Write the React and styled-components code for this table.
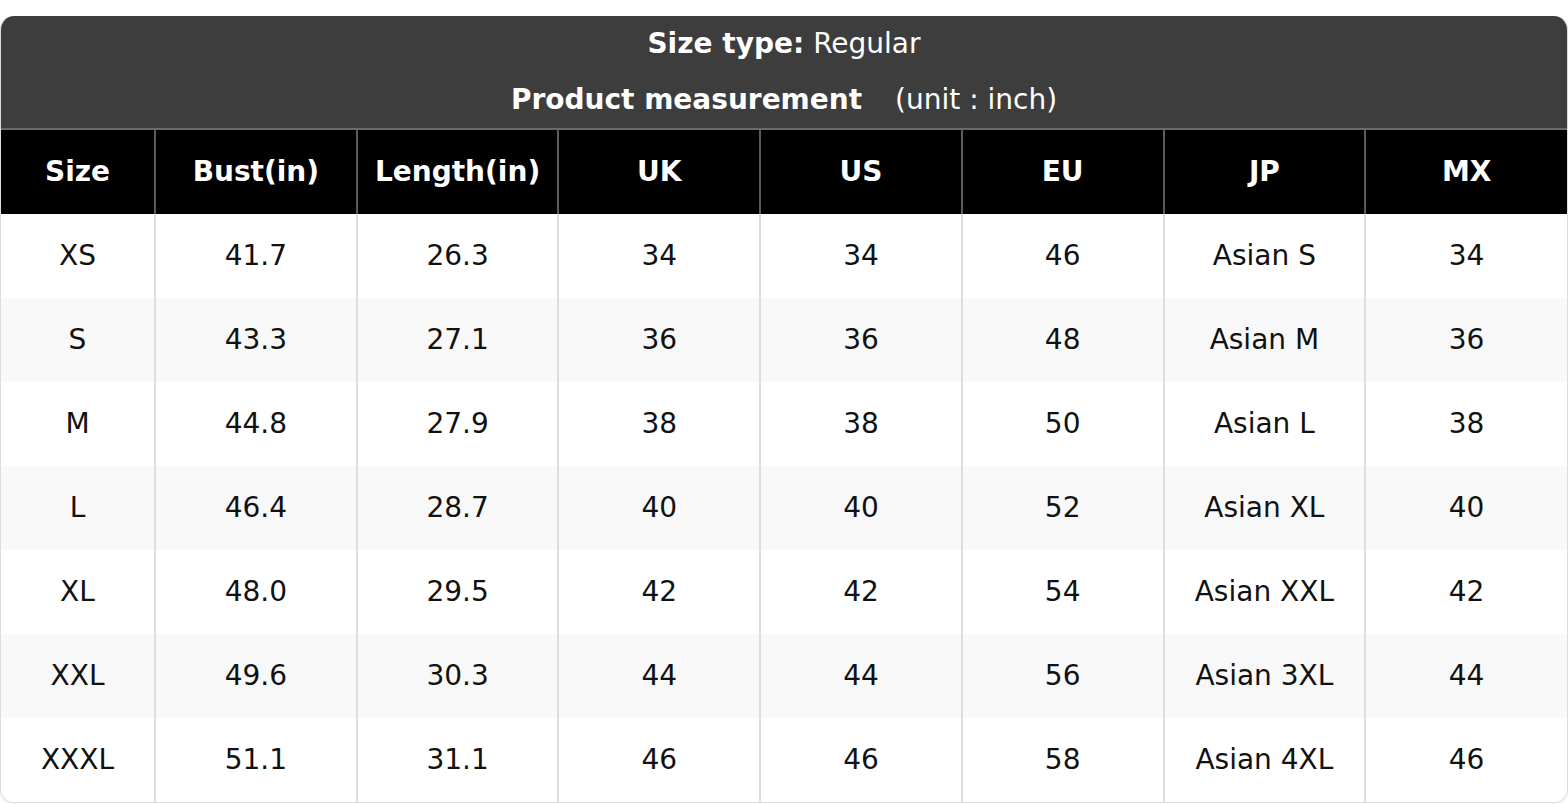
import React from 'react'
import styled, { createGlobalStyle } from 'styled-components'

const GlobalStyle = createGlobalStyle`
     html, body {
          margin: 0;
          padding: 0;
          background: #ffffff;
     }
     body {
          font-family: "DejaVu Sans", "Liberation Sans", sans-serif;
     }
`

const Page = styled.div`
     padding-top: 16px;
     width: 1568px;
`

const Card = styled.div`
     border-radius: 14px;
     overflow: hidden;
     border: 1px solid #dcdcdc;
     border-top: none;
     box-shadow: 0 1px 3px rgba(0, 0, 0, 0.08);
     background: #ffffff;
`

const Caption = styled.div`
     background: #3d3d3d;
     color: #ffffff;
     display: flex;
     flex-direction: column;
     align-items: center;
     font-size: 28px;
     border-bottom: 2px solid #6a6a6a;
`

const CaptionLine = styled.div`
     box-sizing: border-box;
     height: 56px;
     padding-bottom: 1px;
     display: flex;
     align-items: center;
     gap: 9px;

     b {
          font-weight: bold;
     }
`

const Unit = styled.span`
     margin-left: 24px;
`

const Table = styled.table`
     width: 100%;
     border-collapse: collapse;
     table-layout: fixed;
     font-size: 28px;
`

const HeadCell = styled.th`
     background: #000000;
     color: #ffffff;
     font-weight: bold;
     height: 82px;
     padding: 0 0 2px 0;
     text-align: center;
     border-left: 2px solid #5a5a5a;

     &:first-child {
          border-left: none;
     }
`

const Row = styled.tr`
     background: ${ p => p.$shade ? '#f8f8f8' : '#ffffff' };
`

const Cell = styled.td`
     height: 82px;
     padding: 0 0 2px 0;
     text-align: center;
     color: #111111;
     border-left: 2px solid #dddddd;

     &:first-child {
          border-left: none;
     }
`

const columns = ['Size', 'Bust(in)', 'Length(in)', 'UK', 'US', 'EU', 'JP', 'MX']

const rows = [
     ['XS', '41.7', '26.3', '34', '34', '46', 'Asian S', '34'],
     ['S', '43.3', '27.1', '36', '36', '48', 'Asian M', '36'],
     ['M', '44.8', '27.9', '38', '38', '50', 'Asian L', '38'],
     ['L', '46.4', '28.7', '40', '40', '52', 'Asian XL', '40'],
     ['XL', '48.0', '29.5', '42', '42', '54', 'Asian XXL', '42'],
     ['XXL', '49.6', '30.3', '44', '44', '56', 'Asian 3XL', '44'],
     ['XXXL', '51.1', '31.1', '46', '46', '58', 'Asian 4XL', '46'],
]

const App = () => {
     return (
          <Page>
               <GlobalStyle />
               <Card>
                    <Caption>
                         <CaptionLine>
                              <b>Size type:</b> Regular
                         </CaptionLine>
                         <CaptionLine>
                              <b>Product measurement</b>
                              <Unit>(unit : inch)</Unit>
                         </CaptionLine>
                    </Caption>
                    <Table>
                         <colgroup>
                              <col style={{ width: 154 }} />
                              {columns.slice(1).map(c => <col key={c} />)}
                         </colgroup>
                         <thead>
                              <tr>
                                   {columns.map(c => <HeadCell key={c}>{c}</HeadCell>)}
                              </tr>
                         </thead>
                         <tbody>
                              {rows.map((r, i) => (
                                   <Row key={r[0]} $shade={i % 2 === 1}>
                                        {r.map((v, j) => <Cell key={j}>{v}</Cell>)}
                                   </Row>
                              ))}
                         </tbody>
                    </Table>
               </Card>
          </Page>
     )
}

export default App
